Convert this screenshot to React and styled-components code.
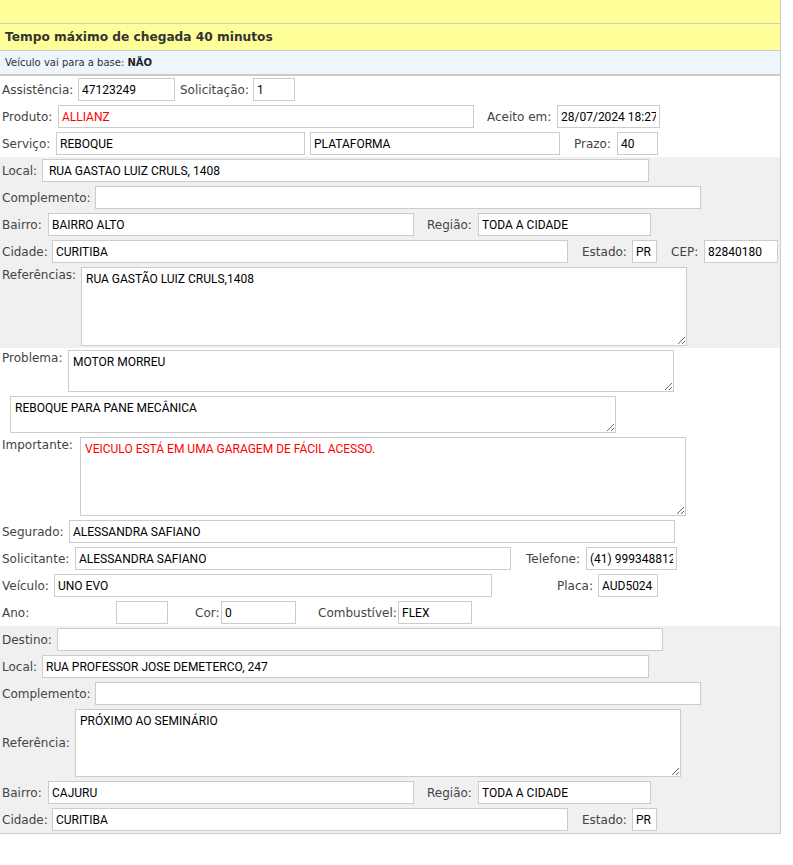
import React from "react";
import styled, { createGlobalStyle } from "styled-components";

const Global = createGlobalStyle`
  body {
    margin: 0;
    background: #fff;
    font-family: "DejaVu Sans", Verdana, sans-serif;
  }
`;

const Page = styled.div`
  width: 781px;
  box-sizing: border-box;
  border-right: 1px solid #ccc;
  border-bottom: 1px solid #ccc;
`;

const TopBar = styled.div`
  height: 23px;
  background: #ffff99;
  border-bottom: 1px solid #ccc;
`;

const TitleBar = styled.div`
  height: 26px;
  line-height: 27px;
  padding-left: 5px;
  background: #ffff99;
  border-bottom: 1px solid #ccc;
  font-size: 12.2px;
  font-weight: bold;
  color: #333;
`;

const InfoBar = styled.div`
  height: 23px;
  line-height: 23px;
  padding-left: 5px;
  background: #eef5fd;
  border-bottom: 2px solid #ccc;
  font-size: 10px;
  color: #333;
  b {
    color: #222;
  }
`;

const Section = styled.div`
  background: ${(p) => (p.$gray ? "#f0f0f0" : "#fff")};
`;

const Row = styled.div`
  display: flex;
  align-items: ${(p) => p.$align || "center"};
  padding: 2px 0 2px 2px;
`;

const Label = styled.span`
  flex-shrink: 0;
  width: ${(p) => p.$w}px;
  margin-left: ${(p) => p.$ml || 0}px;
  font-size: 12px;
  line-height: 16px;
  color: #444;
  white-space: nowrap;
`;

const Field = styled.input`
  flex-shrink: 0;
  box-sizing: border-box;
  width: ${(p) => p.$w}px;
  height: 23px;
  margin: 0 0 0 ${(p) => p.$ml || 0}px;
  padding: 1px 3px 0;
  border: 1px solid #ccc;
  border-radius: 0;
  background: #fff;
  font-family: Roboto, "Liberation Sans", sans-serif;
  font-size: 12px;
  color: ${(p) => (p.$red ? "#f00" : "#000")};
  outline: none;
`;

const Area = styled.textarea`
  flex-shrink: 0;
  box-sizing: border-box;
  width: ${(p) => p.$w || 606}px;
  height: ${(p) => p.$h}px;
  margin: 0 0 0 ${(p) => p.$ml || 0}px;
  padding: 4px 4px;
  border: 1px solid #ccc;
  border-radius: 0;
  background: #fff;
  font-family: Roboto, "Liberation Sans", sans-serif;
  font-size: 12px;
  line-height: 14px;
  color: ${(p) => (p.$red ? "#f00" : "#000")};
  outline: none;
  overflow: hidden;
`;

const In = ({ value = "", ...rest }) => <Field readOnly defaultValue={value} {...rest} />;
const Txt = ({ value = "", ...rest }) => <Area readOnly defaultValue={value} {...rest} />;

export default function App() {
  return (
    <Page>
      <Global />
      <TopBar />
      <TitleBar>Tempo máximo de chegada 40 minutos</TitleBar>
      <InfoBar>
        Veículo vai para a base: <b>NÃO</b>
      </InfoBar>

      <Section>
        <Row>
          <Label $w={76}>Assistência:</Label>
          <In $w={97} value="47123249" />
          <Label $ml={5} $w={73}>Solicitação:</Label>
          <In $w={42} value="1" />
        </Row>
        <Row>
          <Label $w={56}>Produto:</Label>
          <In $w={416} $red value="ALLIANZ" />
          <Label $ml={13} $w={70}>Aceito em:</Label>
          <In $w={103} value="28/07/2024 18:27" />
        </Row>
        <Row>
          <Label $w={54}>Serviço:</Label>
          <In $w={249} value="REBOQUE" />
          <In $ml={5} $w={250} value="PLATAFORMA" />
          <Label $ml={14} $w={43}>Prazo:</Label>
          <In $w={41} value="40" />
        </Row>
      </Section>

      <Section $gray>
        <Row>
          <Label $w={40}>Local:</Label>
          <In $w={607} value=" RUA GASTAO LUIZ CRULS, 1408" />
        </Row>
        <Row>
          <Label $w={93}>Complemento:</Label>
          <In $w={606} />
        </Row>
        <Row>
          <Label $w={46}>Bairro:</Label>
          <In $w={366} value="BAIRRO ALTO" />
          <Label $ml={13} $w={51}>Região:</Label>
          <In $w={173} value="TODA A CIDADE" />
        </Row>
        <Row>
          <Label $w={50}>Cidade:</Label>
          <In $w={516} value="CURITIBA" />
          <Label $ml={14} $w={50}>Estado:</Label>
          <In $w={25} value="PR" />
          <Label $ml={14} $w={33}>CEP:</Label>
          <In $w={74} value="82840180" />
        </Row>
        <Row $align="flex-start">
          <Label $w={79}>Referências:</Label>
          <Txt $h={79} value="RUA GASTÃO LUIZ CRULS,1408" />
        </Row>
      </Section>

      <Section>
        <Row $align="flex-start">
          <Label $w={66}>Problema:</Label>
          <Txt $h={42} value="MOTOR MORREU" />
        </Row>
        <Row>
          <Txt $ml={8} $h={37} value="REBOQUE PARA PANE MECÂNICA" />
        </Row>
        <Row $align="flex-start">
          <Label $w={78}>Importante:</Label>
          <Txt $h={79} $red value="VEICULO ESTÁ EM UMA GARAGEM DE FÁCIL ACESSO." />
        </Row>
        <Row>
          <Label $w={67}>Segurado:</Label>
          <In $w={606} value="ALESSANDRA SAFIANO" />
        </Row>
        <Row>
          <Label $w={73}>Solicitante:</Label>
          <In $w={436} value="ALESSANDRA SAFIANO" />
          <Label $ml={15} $w={60}>Telefone:</Label>
          <In $w={91} value="(41) 999348812" />
        </Row>
        <Row>
          <Label $w={52}>Veículo:</Label>
          <In $w={438} value="UNO EVO" />
          <Label $ml={65} $w={41}>Placa:</Label>
          <In $w={60} value="AUD5024" />
        </Row>
        <Row>
          <Label $w={114}>Ano:</Label>
          <In $w={52} />
          <Label $ml={27} $w={26}>Cor:</Label>
          <In $w={75} value="0" />
          <Label $ml={22} $w={80}>Combustível:</Label>
          <In $w={74} value="FLEX" />
        </Row>
      </Section>

      <Section $gray>
        <Row>
          <Label $w={55}>Destino:</Label>
          <In $w={606} />
        </Row>
        <Row>
          <Label $w={40}>Local:</Label>
          <In $w={607} value="RUA PROFESSOR JOSE DEMETERCO, 247" />
        </Row>
        <Row>
          <Label $w={93}>Complemento:</Label>
          <In $w={606} />
        </Row>
        <Row>
          <Label $w={73}>Referência:</Label>
          <Txt $h={68} value="PRÓXIMO AO SEMINÁRIO" />
        </Row>
        <Row>
          <Label $w={46}>Bairro:</Label>
          <In $w={366} value="CAJURU" />
          <Label $ml={13} $w={51}>Região:</Label>
          <In $w={173} value="TODA A CIDADE" />
        </Row>
        <Row>
          <Label $w={50}>Cidade:</Label>
          <In $w={516} value="CURITIBA" />
          <Label $ml={14} $w={50}>Estado:</Label>
          <In $w={25} value="PR" />
        </Row>
      </Section>
    </Page>
  );
}
